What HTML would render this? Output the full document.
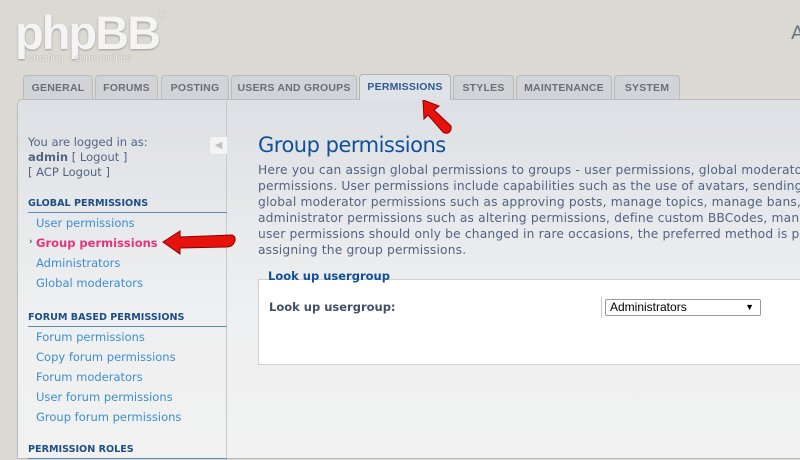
<!DOCTYPE html>
<html><head><meta charset="utf-8"><style>
*{margin:0;padding:0;box-sizing:border-box}
body{width:800px;height:450px;overflow:hidden;background:#dcd9d2;font-family:"DejaVu Sans","Liberation Sans",sans-serif;position:relative}
.abs{position:absolute}
.logo{left:15px;top:8px;font-family:"Liberation Sans",sans-serif;font-size:47px;font-weight:bold;color:#f4f4f4;letter-spacing:-2px;text-shadow:0 1px 2px #999;line-height:50px}
.logo2{left:28px;top:53px;font-family:"Liberation Sans",sans-serif;font-size:10px;color:#f4f4f4;text-shadow:0 0 1px #777}
.tab{position:absolute;top:75px;height:24px;background:#d2d3d6;border:1px solid #b9bbbf;border-bottom:none;border-radius:4px 4px 0 0;font-family:"Liberation Sans",sans-serif;font-weight:bold;font-size:10.5px;letter-spacing:0.2px;color:#6b6e74;text-align:center;line-height:24px}
.tab.act{top:74px;height:26px;background:#dfe3e8;color:#2d5a94;border-color:#b0b4ba;z-index:3}
.panel{left:17px;top:99px;width:800px;height:360px;border:1px solid #b9bbbf;border-radius:5px 0 0 0;background:linear-gradient(#dde0e4,#eff0f1 60%,#f1f1f1)}
.side{left:18px;top:100px;width:209px;height:360px;border-right:1px solid #c8c8c8}
.t{position:absolute;font-size:11.5px;color:#536482;white-space:nowrap}
.lk{position:absolute;left:36px;font-size:11.5px;color:#3d8ed0;white-space:nowrap}
.hd{position:absolute;left:28px;width:199px;font-size:9.6px;font-weight:bold;color:#1d4e88;border-bottom:1px solid #5b8bb8;padding-bottom:3px;white-space:nowrap}
.p{left:258px;top:162px;font-size:12.3px;letter-spacing:0.15px;line-height:16px;color:#536482;white-space:nowrap}
</style></head><body>
<div class="abs logo">phpBB</div>
<div class="abs" style="left:157px;top:10px;font-size:10px;color:#f4f4f4;text-shadow:0 0 1px #888">®</div>
<div class="abs logo2">creating &nbsp;&nbsp;&nbsp;communities</div>
<div class="abs" style="left:791px;top:22px;font-size:19px;color:#6b7480">A</div>

<div class="tab" style="left:23px;width:70px">GENERAL</div>
<div class="tab" style="left:95px;width:63px">FORUMS</div>
<div class="tab" style="left:161px;width:68px">POSTING</div>
<div class="tab" style="left:231px;width:126px">USERS AND GROUPS</div>
<div class="tab act" style="left:359px;width:92px">PERMISSIONS</div>
<div class="tab" style="left:453px;width:61px">STYLES</div>
<div class="tab" style="left:516px;width:96px">MAINTENANCE</div>
<div class="tab" style="left:614px;width:66px">SYSTEM</div>

<div class="abs panel"></div>
<div class="abs side"></div>
<div class="abs" style="left:210px;top:137px;width:17px;height:17px;background:#f4f4f4;border-radius:3px 0 0 3px;color:#c0c0c0;font-size:10px;line-height:17px;text-align:center">◀</div>

<div class="t" style="left:28px;top:135px">You are logged in as:</div>
<div class="t" style="left:28px;top:150px"><b>admin</b> [ Logout ]</div>
<div class="t" style="left:28px;top:165px">[ ACP Logout ]</div>
<div class="hd" style="top:198px">GLOBAL PERMISSIONS</div>
<div class="lk" style="top:216px">User permissions</div>
<div class="abs" style="left:29px;top:237px;font-size:9px;color:#333">›</div>
<div class="lk" style="top:236px;color:#e5337c;font-weight:bold">Group permissions</div>
<div class="lk" style="top:256px">Administrators</div>
<div class="lk" style="top:276px">Global moderators</div>
<div class="hd" style="top:312px">FORUM BASED PERMISSIONS</div>
<div class="lk" style="top:330px">Forum permissions</div>
<div class="lk" style="top:350px">Copy forum permissions</div>
<div class="lk" style="top:370px">Forum moderators</div>
<div class="lk" style="top:390px">User forum permissions</div>
<div class="lk" style="top:410px">Group forum permissions</div>
<div class="hd" style="top:444px">PERMISSION ROLES</div>

<svg class="abs" style="left:160px;top:228px" width="80" height="30"><path d="M3 14 L20 3 L20 9 L72 7 Q77 9 74 15 Q72 19 66 19 L20 20 L20 26 Z" fill="#e8120c" stroke="#8a0000" stroke-width="1"/></svg>
<svg class="abs" style="left:415px;top:96px" width="40" height="42"><path d="M8 4 L24 10 L19 14 L36 30 Q37 35 33 37 Q29 38 27 35 L13 19 L9 23 Z" fill="#e8120c" stroke="#8a0000" stroke-width="1"/></svg>

<div class="abs" style="left:258px;top:133px;font-size:21px;color:#115098;font-family:'DejaVu Sans',sans-serif;letter-spacing:-0.5px">Group permissions</div>
<div class="abs p">Here you can assign global permissions to groups - user permissions, global moderator<br>permissions. User permissions include capabilities such as the use of avatars, sending<br>global moderator permissions such as approving posts, manage topics, manage bans,<br>administrator permissions such as altering permissions, define custom BBCodes, mana<br>user permissions should only be changed in rare occasions, the preferred method is p<br>assigning the group permissions.</div>

<div class="abs" style="left:258px;top:279px;width:560px;height:86px;background:#fff;border:1px solid #d0d0d0"></div>
<div class="abs" style="left:268px;top:269px;font-size:11.5px;font-weight:bold;color:#115098">Look up usergroup</div>
<div class="abs" style="left:269px;top:300px;font-size:11.5px;font-weight:bold;color:#425067">Look up usergroup:</div>
<div class="abs" style="left:601px;top:297px;width:1px;height:21px;background:#ccc"></div>
<div class="abs" style="left:605px;top:299px;width:156px;height:17px;border:1px solid #999;border-radius:2px;background:#fff;font-family:'Liberation Sans',sans-serif;font-size:12px;color:#000;line-height:15px;padding-left:4px">Administrators<span style="position:absolute;right:6px;font-size:9px">▼</span></div>
</body></html>
